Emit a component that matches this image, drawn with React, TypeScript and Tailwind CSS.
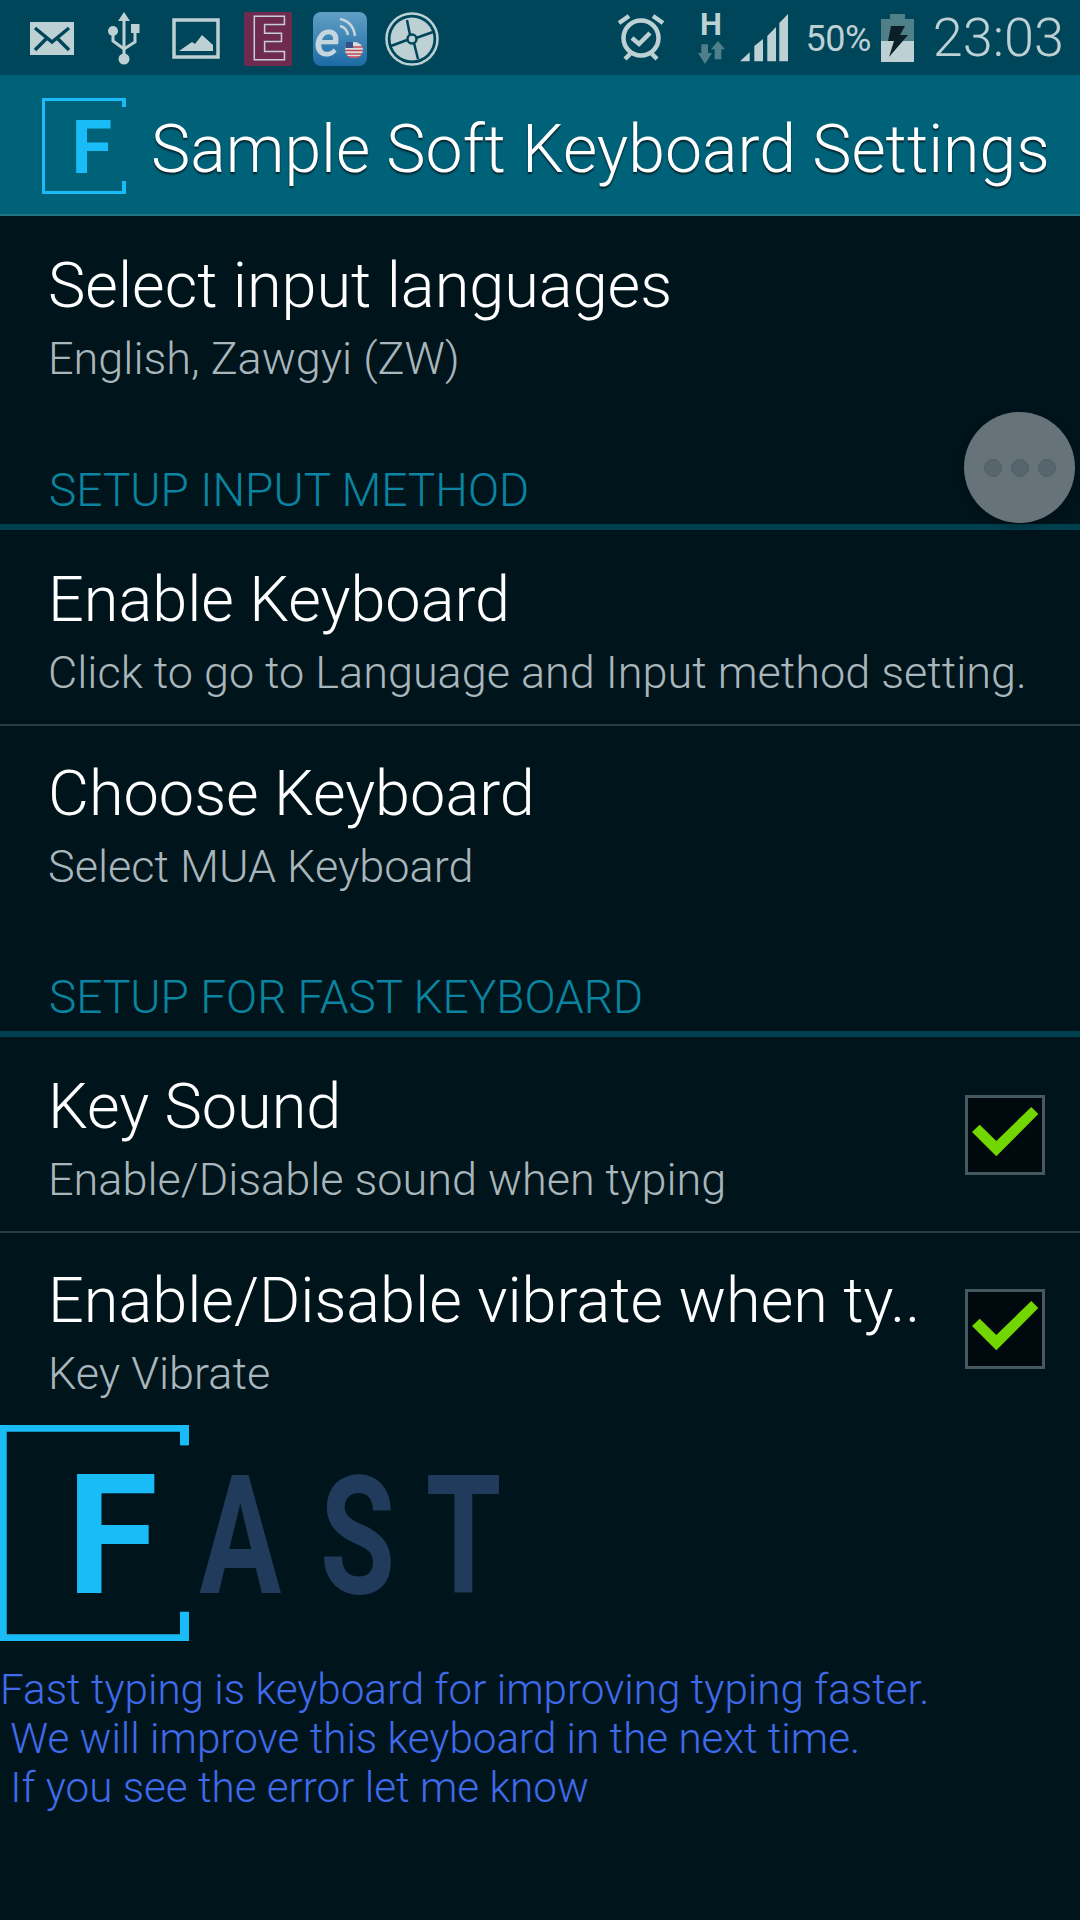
import type { ReactNode } from 'react'

const STATUS = '#bdd0d4'

const MailIcon = () => (
  <svg width="44" height="33" viewBox="0 0 44 33" className="ml-[30px]">
    <rect width="44" height="33" fill={STATUS} />
    <path d="M5 6l17 14L39 6M5 28l11-11M39 28L28 17" fill="none" stroke="#00465a" strokeWidth="3.500" />
  </svg>
)

const UsbIcon = () => (
  <svg width="32" height="53" viewBox="0 0 32 53" className="ml-[34px]">
    <path d="M16 0l-6 9h4.500v38h3V9H22z" fill={STATUS} />
    <path d="M5 22v7l11 8M27 20v10l-11 7" fill="none" stroke={STATUS} strokeWidth="3" />
    <circle cx="16" cy="47" r="5.500" fill={STATUS} />
    <circle cx="5" cy="19" r="5" fill={STATUS} />
    <rect x="23" y="12" width="8.500" height="9" fill={STATUS} />
  </svg>
)

const PictureIcon = () => (
  <svg width="48" height="41" viewBox="0 0 48 41" className="ml-[32px]">
    <rect x="2" y="2" width="44" height="37" fill="none" stroke={STATUS} strokeWidth="3.500" />
    <path d="M7 33l13-9 3 2 7-9 11 10v6z" fill={STATUS} />
  </svg>
)

const EIcon = () => (
  <div className="ml-[24px] flex h-[54px] w-[48px] items-center justify-center rounded-[2px] bg-[#6f2a50] font-[Roboto] text-[60px] leading-[46px] font-bold text-[#6f2a50] [paint-order:stroke_fill] [-webkit-text-stroke:3px_#c3cdd3]">
    E
  </div>
)

const EngIcon = () => (
  <svg width="54" height="54" viewBox="0 0 54 54" className="ml-[21px]">
    <defs>
      <linearGradient id="blue" x1="0" y1="0" x2="0" y2="1">
        <stop offset="0" stopColor="#619fc4" />
        <stop offset="1" stopColor="#1c6ba6" />
      </linearGradient>
    </defs>
    <rect width="54" height="54" rx="8" fill="url(#blue)" />
    <text x="1" y="44" fontFamily="Roboto" fontStyle="italic" fontWeight="500" fontSize="50" fill="#c6d6de">e</text>
    <path d="M27 7c9 2 14 8 15 17M27 14c5 1 7 4 8 9" fill="none" stroke="#c6d6de" strokeWidth="2.500" />
    <ellipse cx="41" cy="38" rx="9" ry="8" fill="#d9dde0" />
    <path d="M32 35h18M32 38.500h18M33 42h16M35 45h12" stroke="#c2464f" strokeWidth="1.500" />
    <rect x="33" y="30" width="7" height="6" fill="#31508c" />
  </svg>
)

const DiscIcon = () => (
  <svg width="54" height="54" viewBox="0 0 54 54" className="ml-[18px]">
    <circle cx="27" cy="27" r="25.500" fill="none" stroke={STATUS} strokeWidth="2.500" />
    <circle cx="27" cy="27" r="21.500" fill={STATUS} />
    <path d="M22 8l3 15M48 20l-17 6M6 34l16-6M33 47l-4-16" stroke="#00465a" strokeWidth="2.500" />
    <circle cx="27" cy="27" r="4.500" fill={STATUS} stroke="#00465a" strokeWidth="2.500" />
  </svg>
)

const AlarmIcon = () => (
  <svg width="48" height="47" viewBox="0 0 48 47">
    <circle cx="24" cy="24" r="17.500" fill="none" stroke={STATUS} strokeWidth="4.500" />
    <path d="M2 9l10-7M46 9L36 2M8 45l5-5M40 45l-5-5" fill="none" stroke={STATUS} strokeWidth="4.500" />
    <path d="M15 24l7 6 11-11" fill="none" stroke={STATUS} strokeWidth="4.500" />
  </svg>
)

const NetworkIcon = () => (
  <div className="ml-[33px] flex w-[27px] flex-col items-center pt-[2px]">
    <span className="font-[Roboto] text-[31px] leading-[23px] font-bold text-[#bdd0d4]">H</span>
    <svg width="27" height="23" viewBox="0 0 27 23" className="mt-[5px]">
      <path d="M3.300 3.300H10V12h4L7 23 0 12h3.300z" fill="#4f8089" />
      <path d="M16.700 18.300h6.600V8.300H27L20 0l-7 8.300h3.700z" fill="#4f8089" />
    </svg>
  </div>
)

const SignalIcon = () => (
  <svg width="48" height="48" viewBox="0 0 48 48" className="ml-[15px]">
    <path d="M0 47.300l9.700-9v9zM14.300 47.300V32l8.700-7v22.300zM27.300 47.300V22l8.700-9v34.300zM39.300 47.300V9L48 0v47.300z" fill={STATUS} />
  </svg>
)

const BatteryIcon = () => (
  <svg width="33" height="48" viewBox="0 0 33 48" className="ml-[10px]">
    <path d="M9 0h15v5h9v22H0V5h9z" fill="#4f8089" />
    <rect y="27" width="33" height="21" fill={STATUS} />
    <path d="M10 12h14l-5 9h8L8 43l5-16H7z" fill="#0d1f26" />
  </svg>
)

const StatusBar = () => (
  <div className="flex h-[75px] shrink-0 items-center bg-[#00465a]">
    <div className="flex items-center pt-[2px]">
      <MailIcon />
      <UsbIcon />
      <PictureIcon />
      <EIcon />
      <EngIcon />
      <DiscIcon />
    </div>
    <div className="flex-1" />
    <AlarmIcon />
    <NetworkIcon />
    <SignalIcon />
    <span className="ml-[18px] pt-[2px] font-[Roboto] text-[36px] font-normal tracking-[-0.5px] text-[#bdd0d4]">50%</span>
    <BatteryIcon />
    <span className="mr-[16px] ml-[19px] font-[Roboto] text-[54px] font-light text-[#bdd0d4]">23:03</span>
  </div>
)

const LogoMark = ({ className }: { className: string }) => (
  <svg viewBox="0 0 84 96" className={className}>
    <path d="M82 9V1.500H1.500v93H82V84" fill="none" stroke="#1abcf7" strokeWidth="3" />
    <rect x="80" y="0" width="4" height="9" fill="#1abcf7" />
    <rect x="80" y="83" width="4" height="13" fill="#1abcf7" />
    <text x="29.500" y="74.500" fontFamily="Roboto" fontWeight="700" fontSize="74" fill="#1abcf7">F</text>
  </svg>
)

const ActionBar = () => (
  <div className="flex h-[141px] shrink-0 items-center border-b-2 border-[#1f7583] bg-[#006279] pt-[2px] pl-[42px]">
    <LogoMark className="h-[96px] w-[84px]" />
    <span className="mt-[9px] ml-[25px] font-[Roboto] text-[66.200px] font-light whitespace-nowrap text-white [text-shadow:0_2px_2px_#00222c]">
      Sample Soft Keyboard Settings
    </span>
  </div>
)

const CheckBox = () => (
  <div className="flex h-[80px] w-[80px] shrink-0 items-center justify-center border-[3px] border-[#465860] bg-[#000a0e]">
    <svg width="67" height="50" viewBox="0 0 67 50" className="mb-[7px]">
      <path d="M0 25l7.700-7.300L24.300 34 59.300 0l7 7-42 42.300z" fill="#72d600" />
    </svg>
  </div>
)

type RowProps = {
  title: string
  summary: string
  height: string
  checked?: boolean
}

const Row = ({ title, summary, height, checked }: RowProps) => (
  <div className={`flex shrink-0 items-start pl-[48px] ${height}`}>
    <div className="min-w-0 flex-1 pt-[34px]">
      <div className="font-[Roboto] text-[63px] leading-[72px] font-light whitespace-nowrap text-white">{title}</div>
      <div className="mt-[11px] font-[Roboto] text-[45px] leading-[52px] font-light whitespace-nowrap text-[#a9b6bb]">{summary}</div>
    </div>
    {checked && (
      <div className="mt-[58px] mr-[35px] ml-[40px]">
        <CheckBox />
      </div>
    )}
  </div>
)

// next row starts on top of the line, the reference rows are 2px tighter here
const Divider = () => <div className="-mb-[2px] h-[2px] shrink-0 bg-[#2a3c43]" />

const Category = ({ children }: { children: ReactNode }) => (
  <div className="flex h-[100px] shrink-0 flex-col justify-end">
    <div className="pb-[10px] pl-[49px] font-[Roboto] text-[46px] leading-[48px] font-[350] text-[#0a84a0]">{children}</div>
    <div className="h-[6px] bg-[#00404e]" />
  </div>
)

export default function App() {
  return (
    <div className="relative flex h-[1920px] w-[1080px] flex-col overflow-hidden bg-[#00141c]">
      <StatusBar />
      <ActionBar />
      <Row title="Select input languages" summary="English, Zawgyi (ZW)" height="h-[214px]" />
      <Category>SETUP INPUT METHOD</Category>
      <Row title="Enable Keyboard" summary="Click to go to Language and Input method setting." height="h-[194px]" />
      <Divider />
      <Row title="Choose Keyboard" summary="Select MUA Keyboard" height="h-[213px]" />
      <Category>SETUP FOR FAST KEYBOARD</Category>
      <Row title="Key Sound" summary="Enable/Disable sound when typing" height="h-[194px]" checked />
      <Divider />
      <Row title="Enable/Disable vibrate when ty.." summary="Key Vibrate" height="h-[194px]" checked />
      <div className="flex h-[216px] shrink-0 items-start blur-[0.6px]">
        <LogoMark className="h-[216px] w-[189px]" />
        <svg width="320" height="216" viewBox="0 0 320 216" fontFamily="Roboto" fontWeight="700" fontSize="165" fill="#213b5c">
          <text transform="scale(0.74 1)" x="14 177 320" y="168">AST</text>
        </svg>
      </div>
      <div className="mt-[24px] font-[Roboto] text-[42.200px] leading-[49px] font-light whitespace-pre text-[#3f6bea]">
        {'Fast typing is keyboard for improving typing faster.\n We will improve this keyboard in the next time.\n If you see the error let me know'}
      </div>
      {/* floating shortcut bubble */}
      <div className="absolute top-[412px] left-[964px] flex h-[111px] w-[111px] items-center justify-center gap-[9px] rounded-full bg-[#667479] shadow-[0_4px_10px_rgba(0,0,0,0.25)]">
        <span className="h-[18px] w-[18px] rounded-full border border-[#505f65] bg-[#57666c]" />
        <span className="h-[18px] w-[18px] rounded-full border border-[#505f65] bg-[#57666c]" />
        <span className="h-[18px] w-[18px] rounded-full border border-[#505f65] bg-[#57666c]" />
      </div>
    </div>
  )
}
